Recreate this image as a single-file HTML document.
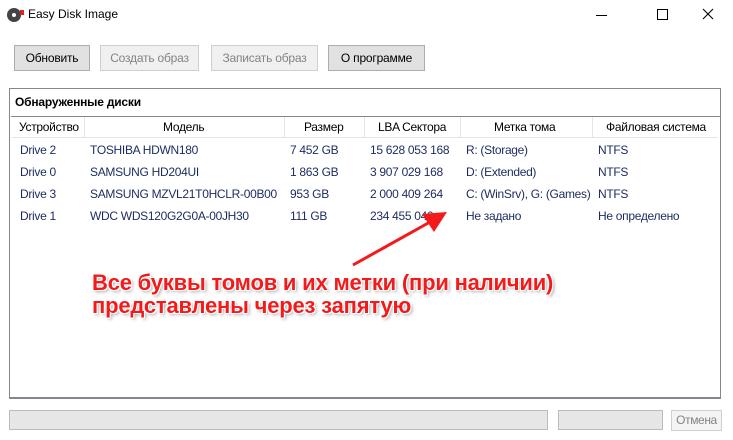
<!DOCTYPE html>
<html><head><meta charset="utf-8"><style>
body{margin:0;width:733px;height:440px;background:#fff;font-family:"Segoe UI","Liberation Sans","DejaVu Sans",sans-serif;font-size:12px;position:relative;overflow:hidden;color:#000}
.a{position:absolute}
.btn{position:absolute;top:45px;height:26px;box-sizing:border-box;border:1px solid #adadad;background:#e1e1e1;text-align:center;line-height:24px;font-size:12px;letter-spacing:-0.2px}
.dis{color:#838383;background:#f0f0f0;border-color:#cfcfcf}
.h{position:absolute;top:120px;color:#000;letter-spacing:-0.3px}
.c{position:absolute;color:#1c2b5e;letter-spacing:-0.3px;white-space:nowrap}
.sep{position:absolute;top:117px;width:1px;height:20px;background:#e5e5e5}
.red{position:absolute;left:92px;color:#f21a1a;font:bold 22px "Liberation Sans",sans-serif;text-shadow:1px 1px 0 #fff,-1px -1px 0 #fff,1px -1px 0 #fff,-1px 1px 0 #fff,2px 2px 3px rgba(0,0,0,.35);white-space:nowrap;letter-spacing:-0.2px}
</style></head><body>
<svg class="a" style="left:6px;top:7px" width="20" height="16"><circle cx="8" cy="8" r="7" fill="#444"/><circle cx="8" cy="8" r="2" fill="#fff"/><rect x="14" y="3" width="4" height="5" fill="#d22"/></svg>
<div class="a" style="left:28px;top:7px;font-size:12px">Easy Disk Image</div>
<div class="a" style="left:596px;top:15px;width:11px;height:1px;background:#000"></div>
<div class="a" style="left:657px;top:9px;width:9px;height:9px;border:1px solid #000"></div>
<svg class="a" style="left:702px;top:8px" width="12" height="12"><path d="M1 1L11 11M11 1L1 11" stroke="#000" stroke-width="1.1"/></svg>
<div class="btn" style="left:14px;width:76px">Обновить</div>
<div class="btn dis" style="left:100px;width:99px">Создать образ</div>
<div class="btn dis" style="left:211px;width:107px">Записать образ</div>
<div class="btn" style="left:328px;width:97px">О программе</div>
<div class="a" style="left:9px;top:88px;width:712px;height:311px;border:1px solid #828790;box-sizing:border-box;border-width:1px 1px 2px 1px"></div>
<div class="a" style="left:15px;top:95px;font-weight:bold;font-size:12px;letter-spacing:-0.2px">Обнаруженные диски</div>
<div class="a" style="left:11px;top:116px;width:709px;height:282px;border:1px solid #828790;box-sizing:border-box;border-width:1px 0 0 0"></div>
<div class="a" style="left:12px;top:137px;width:706px;height:1px;background:#e5e5e5"></div>
<div class="sep" style="left:84px"></div><div class="sep" style="left:284px"></div><div class="sep" style="left:364px"></div><div class="sep" style="left:460px"></div><div class="sep" style="left:592px"></div>
<div class="h" style="left:19px">Устройство</div>
<div class="h" style="left:163px">Модель</div>
<div class="h" style="left:304px">Размер</div>
<div class="h" style="left:378px">LBA Сектора</div>
<div class="h" style="left:494px">Метка тома</div>
<div class="h" style="left:606px">Файловая система</div>
<div class="c" style="left:20px;top:139px;line-height:22px">Drive 2<br>Drive 0<br>Drive 3<br>Drive 1</div>
<div class="c" style="left:90px;top:139px;line-height:22px">TOSHIBA HDWN180<br>SAMSUNG HD204UI<br>SAMSUNG MZVL21T0HCLR-00B00<br>WDC WDS120G2G0A-00JH30</div>
<div class="c" style="left:290px;top:139px;line-height:22px">7 452 GB<br>1 863 GB<br>953 GB<br>111 GB</div>
<div class="c" style="left:370px;top:139px;line-height:22px">15 628 053 168<br>3 907 029 168<br>2 000 409 264<br>234 455 040</div>
<div class="c" style="left:466px;top:139px;line-height:22px">R: (Storage)<br>D: (Extended)<br>C: (WinSrv), G: (Games)<br>Не задано</div>
<div class="c" style="left:598px;top:139px;line-height:22px">NTFS<br>NTFS<br>NTFS<br>Не определено</div>
<svg class="a" style="left:0;top:0" width="733" height="440"><line x1="353" y1="265" x2="430" y2="222" stroke="#f21a1a" stroke-width="3"/><polygon points="447,212 422,214 434,232" fill="#f21a1a"/></svg>
<div class="red" style="top:270px">Все буквы томов и их метки (при наличии)</div>
<div class="red" style="top:293px">представлены через запятую</div>
<div class="a" style="left:9px;top:410px;width:539px;height:20px;background:#e6e6e6;border:1px solid #bcbcbc;box-sizing:border-box"></div>
<div class="a" style="left:558px;top:410px;width:105px;height:20px;background:#e6e6e6;border:1px solid #bcbcbc;box-sizing:border-box"></div>
<div class="a" style="left:671px;top:410px;width:51px;height:21px;background:#f4f4f4;border:1px solid #cfcfcf;box-sizing:border-box;color:#838383;text-align:center;line-height:19px;letter-spacing:-0.4px">Отмена</div>
</body></html>
